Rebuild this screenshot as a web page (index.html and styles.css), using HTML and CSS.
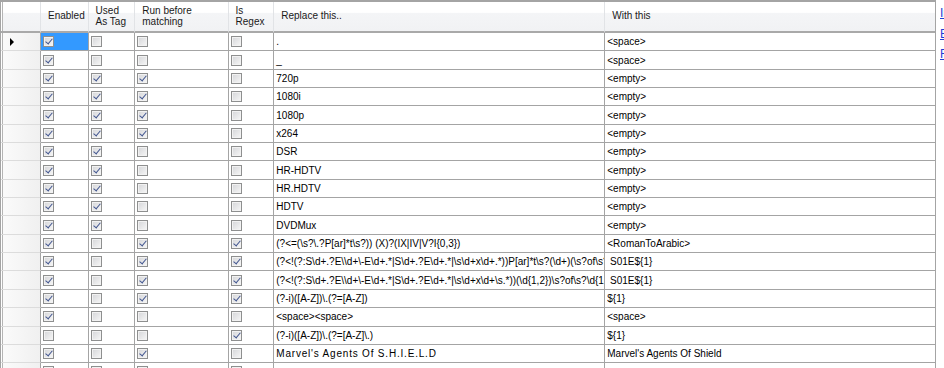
FILE: index.html
```html
<!DOCTYPE html>
<html lang="en">
<head>
  <meta charset="UTF-8" />
  <title>Replacements</title>
  <link rel="stylesheet" href="styles.css">
</head>
<body>

  <div class="ventana">

    <div class="rejilla">

      <div class="fila cabecera">
        <div class="celda esquina"></div>
        <div class="celda hcelda">Enabled</div>
        <div class="celda hcelda">Used<br>As Tag</div>
        <div class="celda hcelda">Run before<br>matching</div>
        <div class="celda hcelda">Is<br>Regex</div>
        <div class="celda hcelda">Replace this..</div>
        <div class="celda hcelda">With this</div>
      </div>

      <div class="fila">
        <div class="celda cab-fila actual"><span class="flecha"></span></div>
        <div class="celda chk seleccion"><i class="caja on"></i></div>
        <div class="celda chk"><i class="caja"></i></div>
        <div class="celda chk"><i class="caja"></i></div>
        <div class="celda chk"><i class="caja"></i></div>
        <div class="celda txt">.</div>
        <div class="celda txt">&lt;space&gt;</div>
      </div>

      <div class="fila">
        <div class="celda cab-fila"></div>
        <div class="celda chk"><i class="caja on"></i></div>
        <div class="celda chk"><i class="caja"></i></div>
        <div class="celda chk"><i class="caja"></i></div>
        <div class="celda chk"><i class="caja"></i></div>
        <div class="celda txt">_</div>
        <div class="celda txt">&lt;space&gt;</div>
      </div>

      <div class="fila">
        <div class="celda cab-fila"></div>
        <div class="celda chk"><i class="caja on"></i></div>
        <div class="celda chk"><i class="caja on"></i></div>
        <div class="celda chk"><i class="caja on"></i></div>
        <div class="celda chk"><i class="caja"></i></div>
        <div class="celda txt">720p</div>
        <div class="celda txt">&lt;empty&gt;</div>
      </div>

      <div class="fila">
        <div class="celda cab-fila"></div>
        <div class="celda chk"><i class="caja on"></i></div>
        <div class="celda chk"><i class="caja on"></i></div>
        <div class="celda chk"><i class="caja on"></i></div>
        <div class="celda chk"><i class="caja"></i></div>
        <div class="celda txt">1080i</div>
        <div class="celda txt">&lt;empty&gt;</div>
      </div>

      <div class="fila">
        <div class="celda cab-fila"></div>
        <div class="celda chk"><i class="caja on"></i></div>
        <div class="celda chk"><i class="caja on"></i></div>
        <div class="celda chk"><i class="caja on"></i></div>
        <div class="celda chk"><i class="caja"></i></div>
        <div class="celda txt">1080p</div>
        <div class="celda txt">&lt;empty&gt;</div>
      </div>

      <div class="fila">
        <div class="celda cab-fila"></div>
        <div class="celda chk"><i class="caja on"></i></div>
        <div class="celda chk"><i class="caja on"></i></div>
        <div class="celda chk"><i class="caja on"></i></div>
        <div class="celda chk"><i class="caja"></i></div>
        <div class="celda txt">x264</div>
        <div class="celda txt">&lt;empty&gt;</div>
      </div>

      <div class="fila">
        <div class="celda cab-fila"></div>
        <div class="celda chk"><i class="caja on"></i></div>
        <div class="celda chk"><i class="caja on"></i></div>
        <div class="celda chk"><i class="caja"></i></div>
        <div class="celda chk"><i class="caja"></i></div>
        <div class="celda txt">DSR</div>
        <div class="celda txt">&lt;empty&gt;</div>
      </div>

      <div class="fila">
        <div class="celda cab-fila"></div>
        <div class="celda chk"><i class="caja on"></i></div>
        <div class="celda chk"><i class="caja on"></i></div>
        <div class="celda chk"><i class="caja"></i></div>
        <div class="celda chk"><i class="caja"></i></div>
        <div class="celda txt">HR-HDTV</div>
        <div class="celda txt">&lt;empty&gt;</div>
      </div>

      <div class="fila">
        <div class="celda cab-fila"></div>
        <div class="celda chk"><i class="caja on"></i></div>
        <div class="celda chk"><i class="caja on"></i></div>
        <div class="celda chk"><i class="caja"></i></div>
        <div class="celda chk"><i class="caja"></i></div>
        <div class="celda txt">HR.HDTV</div>
        <div class="celda txt">&lt;empty&gt;</div>
      </div>

      <div class="fila">
        <div class="celda cab-fila"></div>
        <div class="celda chk"><i class="caja on"></i></div>
        <div class="celda chk"><i class="caja on"></i></div>
        <div class="celda chk"><i class="caja"></i></div>
        <div class="celda chk"><i class="caja"></i></div>
        <div class="celda txt">HDTV</div>
        <div class="celda txt">&lt;empty&gt;</div>
      </div>

      <div class="fila">
        <div class="celda cab-fila"></div>
        <div class="celda chk"><i class="caja on"></i></div>
        <div class="celda chk"><i class="caja on"></i></div>
        <div class="celda chk"><i class="caja"></i></div>
        <div class="celda chk"><i class="caja"></i></div>
        <div class="celda txt">DVDMux</div>
        <div class="celda txt">&lt;empty&gt;</div>
      </div>

      <div class="fila">
        <div class="celda cab-fila"></div>
        <div class="celda chk"><i class="caja on"></i></div>
        <div class="celda chk"><i class="caja"></i></div>
        <div class="celda chk"><i class="caja on"></i></div>
        <div class="celda chk"><i class="caja on"></i></div>
        <div class="celda txt">(?&lt;=(\s?\.?P[ar]*t\s?)) (X)?(IX|IV|V?I{0,3})</div>
        <div class="celda txt">&lt;RomanToArabic&gt;</div>
      </div>

      <div class="fila">
        <div class="celda cab-fila"></div>
        <div class="celda chk"><i class="caja on"></i></div>
        <div class="celda chk"><i class="caja"></i></div>
        <div class="celda chk"><i class="caja on"></i></div>
        <div class="celda chk"><i class="caja on"></i></div>
        <div class="celda txt">(?&lt;!(?:S\d+.?E\\d+\-E\d+.*|S\d+.?E\d+.*|\s\d+x\d+.*))P[ar]*t\s?(\d+)(\s?of\s?\d+)?</div>
        <div class="celda txt"> S01E${1}</div>
      </div>

      <div class="fila">
        <div class="celda cab-fila"></div>
        <div class="celda chk"><i class="caja on"></i></div>
        <div class="celda chk"><i class="caja"></i></div>
        <div class="celda chk"><i class="caja on"></i></div>
        <div class="celda chk"><i class="caja on"></i></div>
        <div class="celda txt">(?&lt;!(?:S\d+.?E\\d+\-E\d+.*|S\d+.?E\d+.*|\s\d+x\d+\s.*))(\d{1,2})\s?of\s?\d{1,2}</div>
        <div class="celda txt"> S01E${1}</div>
      </div>

      <div class="fila">
        <div class="celda cab-fila"></div>
        <div class="celda chk"><i class="caja on"></i></div>
        <div class="celda chk"><i class="caja"></i></div>
        <div class="celda chk"><i class="caja on"></i></div>
        <div class="celda chk"><i class="caja on"></i></div>
        <div class="celda txt">(?-i)([A-Z])\.(?=[A-Z])</div>
        <div class="celda txt">${1}</div>
      </div>

      <div class="fila">
        <div class="celda cab-fila"></div>
        <div class="celda chk"><i class="caja on"></i></div>
        <div class="celda chk"><i class="caja"></i></div>
        <div class="celda chk"><i class="caja"></i></div>
        <div class="celda chk"><i class="caja"></i></div>
        <div class="celda txt">&lt;space&gt;&lt;space&gt;</div>
        <div class="celda txt">&lt;space&gt;</div>
      </div>

      <div class="fila">
        <div class="celda cab-fila"></div>
        <div class="celda chk"><i class="caja"></i></div>
        <div class="celda chk"><i class="caja"></i></div>
        <div class="celda chk"><i class="caja"></i></div>
        <div class="celda chk"><i class="caja on"></i></div>
        <div class="celda txt">(?-i)([A-Z])\.(?=[A-Z]\.)</div>
        <div class="celda txt">${1}</div>
      </div>

      <div class="fila">
        <div class="celda cab-fila"></div>
        <div class="celda chk"><i class="caja on"></i></div>
        <div class="celda chk"><i class="caja"></i></div>
        <div class="celda chk"><i class="caja on"></i></div>
        <div class="celda chk"><i class="caja"></i></div>
        <div class="celda txt ancho">Marvel's Agents Of S.H.I.E.L.D</div>
        <div class="celda txt">Marvel's Agents Of Shield</div>
      </div>

      <div class="fila">
        <div class="celda cab-fila"></div>
        <div class="celda chk"><i class="caja"></i></div>
        <div class="celda chk"><i class="caja"></i></div>
        <div class="celda chk"><i class="caja"></i></div>
        <div class="celda chk"><i class="caja"></i></div>
        <div class="celda txt"></div>
        <div class="celda txt"></div>
      </div>

    </div>

    <div class="enlaces">
      <a href="#">Import</a>
      <a href="#">Export</a>
      <a href="#">Factory defaults</a>
    </div>

  </div>

</body>
</html>
```

FILE: styles.css
```css
* {
  box-sizing: border-box;
}

body {
  margin: 0;
  width: 944px;
  height: 368px;
  overflow: hidden;
  font-family: "Liberation Sans", Arial, sans-serif;
  font-size: 10px;
  color: #000;
  background-color: #fff;
}

.ventana {
  display: flex;
  align-items: flex-start;
}

.rejilla {
  flex: none;
  width: 936px;
  border: 1px solid #a4a4a4;
  border-top-width: 2px;
  border-bottom: none;
}

.fila {
  display: grid;
  grid-template-columns: 40px 47.6px 46.7px 93.3px 45.7px 331px 1fr;
  height: 18.35px;
}

.celda {
  display: flex;
  align-items: center;
  overflow: hidden;
  border-right: 1px solid #a4a4a4;
  border-bottom: 1px solid #a4a4a4;
}

.celda:last-child {
  border-right: none;
}

/* Cabecera */
.cabecera {
  height: 31px;
}

.cabecera .celda {
  background: linear-gradient(#ffffff 0%, #ffffff 36%, #f4f5f7 38%, #f1f2f4 100%);
  border-right-color: #e1e3e6;
  border-bottom: 2px solid #a9a9a9;
}

.hcelda {
  padding-left: 7px;
  line-height: 10.5px;
  color: #1a1a1a;
}

.esquina {
  box-shadow: inset 1px 0 #fff, inset 2px 0 #b4b4b4;
}

/* Cabecera de fila */
.cab-fila {
  padding-left: 9px;
  background: linear-gradient(to right, #fbfbfb, #f0f0f0);
  border-bottom-color: #dcdcdc;
  box-shadow: inset 1px 0 #fff, inset 2px 0 #b4b4b4;
}

.flecha {
  width: 0;
  height: 0;
  border-left: 4px solid #000;
  border-top: 4px solid transparent;
  border-bottom: 4px solid transparent;
}

/* Celdas */
.txt {
  padding-left: 2px;
  white-space: pre;
}

.ancho {
  letter-spacing: 0.8px;
}

.chk {
  padding-left: 2px;
}

.seleccion {
  background-color: #3399ff;
}

.caja {
  position: relative;
  display: block;
  width: 11px;
  height: 11px;
  border: 1px solid #8e8f8f;
  background: linear-gradient(135deg, #d4d5d8, #f7f7f7);
  box-shadow: inset 0 0 0 1px #f2f2f2;
}

.caja.on::after {
  content: "";
  position: absolute;
  left: 3px;
  top: 0px;
  width: 3px;
  height: 6px;
  border: solid #41558f;
  border-width: 0 1.8px 1.8px 0;
  transform: rotate(40deg);
}

/* Enlaces */
.enlaces {
  display: flex;
  flex-direction: column;
  gap: 8.5px;
  padding: 7px 0 0 4px;
  white-space: nowrap;
}

.enlaces a {
  font-size: 12px;
  line-height: 12px;
  color: #1f3fd6;
}
```
